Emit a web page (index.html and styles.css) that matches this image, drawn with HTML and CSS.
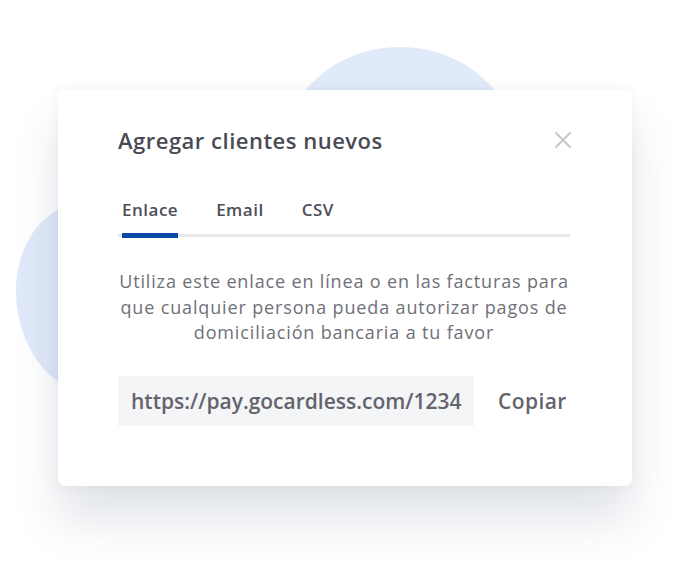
FILE: index.html
```html
<!DOCTYPE html>
<html lang="es">
<head>
    <meta charset="UTF-8">
    <meta name="viewport" content="width=device-width, initial-scale=1.0">
    <title>Agregar clientes nuevos</title>
    <link rel="stylesheet" href="styles.css">
</head>
<body>
    <div class="stage">
        <div class="blob blob-top"></div>
        <div class="blob blob-left"></div>

        <div class="modal">
            <div class="modal-header">
                <h1>Agregar clientes nuevos</h1>
                <button class="close-btn" title="Cerrar">
                    <svg width="18" height="18" viewBox="0 0 18 18">
                        <path d="M2 2 L16 16 M16 2 L2 16" stroke="#c9c9cd" stroke-width="2.2" stroke-linecap="round"/>
                    </svg>
                </button>
            </div>

            <div class="tabs">
                <div class="tab active">Enlace</div>
                <div class="tab">Email</div>
                <div class="tab">CSV</div>
            </div>

            <p class="description">
                Utiliza este enlace en línea o en las facturas para<br>
                que cualquier persona pueda autorizar pagos de<br>
                domiciliación bancaria a tu favor
            </p>

            <div class="link-row">
                <div class="link-box">https://pay.gocardless.com/1234</div>
                <button class="copy-btn">Copiar</button>
            </div>
        </div>
    </div>
</body>
</html>
```

FILE: styles.css
```css
body {
    font-family: "Open Sans", Lato, Arial, sans-serif;
    margin: 0;
    background: #ffffff;
    color: #4b4b55;
}

.stage {
    position: relative;
    width: 680px;
    height: 580px;
    padding: 90px 0 0 58px;
    box-sizing: border-box;
    overflow: hidden;
}

.blob {
    position: absolute;
    background: #e1eafa;
    z-index: 0;
}

.blob-top {
    left: 282px;
    top: 47px;
    width: 236px;
    height: 215px;
    border-radius: 50%;
}

.blob-left {
    left: 16px;
    top: 203px;
    width: 150px;
    height: 192px;
    border-radius: 50% 40% 40% 60%;
}

.modal {
    position: relative;
    z-index: 1;
    width: 574px;
    height: 396px;
    box-sizing: border-box;
    padding: 36px 62px 0 60px;
    background: #ffffff;
    border-radius: 7px;
    box-shadow: 0 0 14px rgba(60, 70, 100, 0.06), 0 34px 46px rgba(70, 85, 120, 0.16);
}

.modal-header {
    display: flex;
    justify-content: space-between;
    align-items: center;
    height: 28px;
}

.modal-header h1 {
    margin: 0;
    font-size: 22px;
    line-height: 26px;
    font-weight: 600;
    letter-spacing: 0.5px;
    color: #4a4a54;
}

.close-btn {
    border: none;
    background: none;
    padding: 0;
    margin-right: -2px;
    cursor: pointer;
    display: flex;
}

.tabs {
    display: flex;
    margin-top: 45px;
    padding-left: 4px;
    border-bottom: 3px solid #e6e7ea;
}

.tab {
    font-size: 17px;
    line-height: 22px;
    font-weight: 600;
    letter-spacing: 0.5px;
    color: #4e4e58;
    padding-bottom: 12px;
    margin-right: 38px;
    margin-bottom: -4px;
    border-bottom: 5px solid transparent;
}

.tab.active {
    border-bottom-color: #0b47a6;
}

.description {
    margin: 32px 0 0;
    text-align: center;
    font-size: 18px;
    line-height: 25.5px;
    letter-spacing: 0.85px;
    color: #707079;
}

.link-row {
    display: flex;
    align-items: center;
    margin-top: 30px;
}

.link-box {
    width: 356px;
    height: 50px;
    box-sizing: border-box;
    display: flex;
    align-items: center;
    padding-left: 13px;
    background: #f4f5f7;
    font-size: 21px;
    font-weight: 600;
    letter-spacing: 0;
    color: #63636c;
}

.copy-btn {
    margin-left: 24px;
    border: none;
    background: none;
    padding: 0;
    font-family: inherit;
    font-size: 21px;
    font-weight: 600;
    letter-spacing: 0.4px;
    color: #63636c;
    cursor: pointer;
}
```
